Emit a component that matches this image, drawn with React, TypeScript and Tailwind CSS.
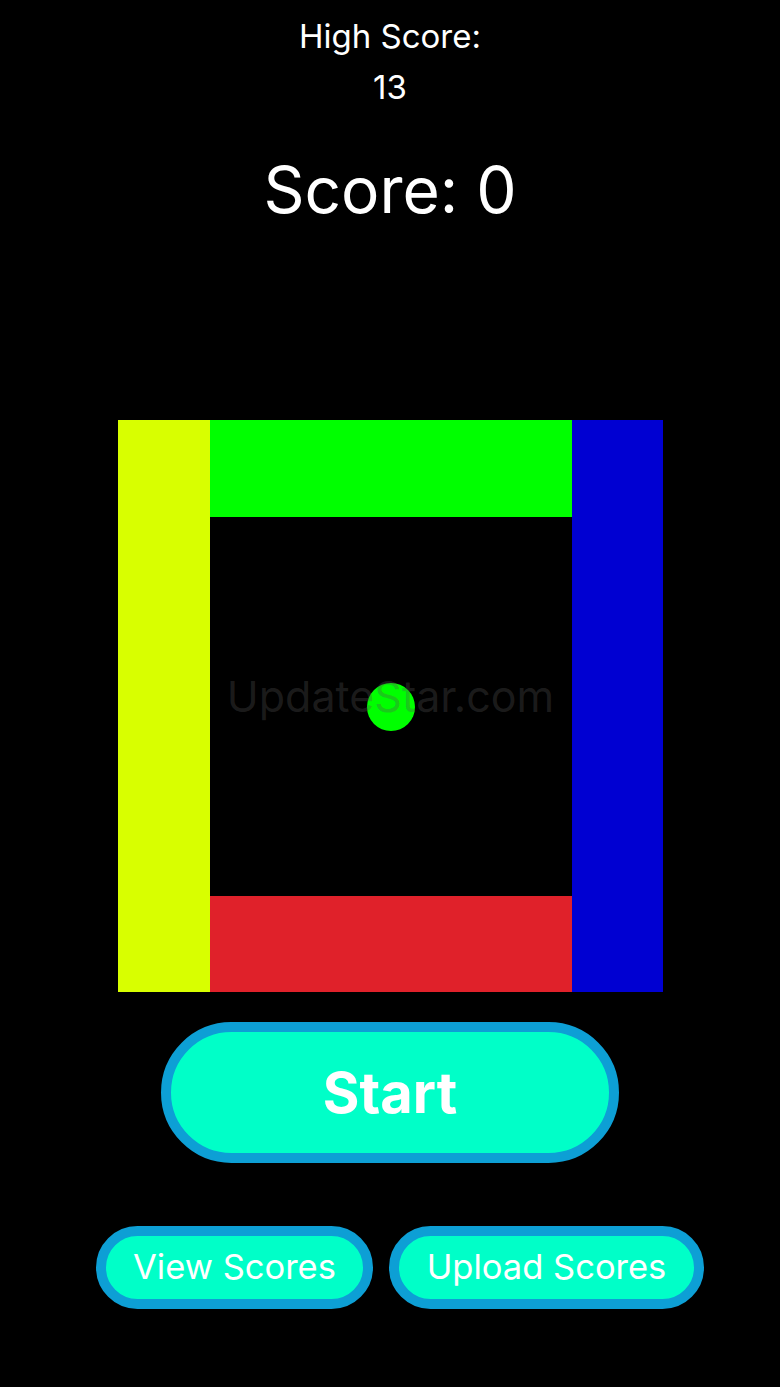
import React from 'react';

const font = { fontFamily: 'Inter, "Noto Sans", sans-serif' };

const PillButton: React.FC<{ label: string; className: string; textClass: string }> = ({ label, className, textClass }) => (
  <button
    className={`flex items-center justify-center rounded-full border-[10px] border-[#0d9fd5] bg-[#00ffc8] text-white ${className}`}
  >
    <span className={textClass}>{label}</span>
  </button>
);

export default function App() {
  return (
    <div className="flex min-h-[1387px] w-full flex-col items-center bg-black text-white" style={font}>
      <div className="pt-[11px] text-center text-[33px] leading-[51px]">
        <div>High Score:</div>
        <div>13</div>
      </div>

      <div className="mt-[41px] text-[64px] leading-[72px]">Score: 0</div>

      {/* Board */}
      <div className="mt-[194px] flex h-[572px] w-[545px]">
        <div className="w-[92px] bg-[#d8ff00]" />
        <div className="flex w-[362px] flex-col">
          <div className="h-[97px] bg-[#00ff00]" />
          <div className="relative flex flex-1 items-center justify-center bg-black">
            <div className="h-[48px] w-[48px] rounded-full bg-[#00ff00]" />
            <span className="absolute left-1/2 top-[159px] -translate-x-1/2 whitespace-nowrap text-[43px] leading-[40px] text-[rgba(85,85,85,0.33)]">
              UpdateStar.com
            </span>
          </div>
          <div className="h-[96px] bg-[#e0212a]" />
        </div>
        <div className="w-[91px] bg-[#0000d2]" />
      </div>

      <PillButton label="Start" className="mt-[30px] h-[141px] w-[458px]" textClass="text-[56px] font-bold leading-none" />

      <div className="mt-[63px] flex gap-[16px] pl-[20px]">
        <PillButton label="View Scores" className="h-[83px] w-[277px]" textClass="text-[34.5px] leading-none" />
        <PillButton label="Upload Scores" className="h-[83px] w-[315px]" textClass="text-[34.5px] leading-none" />
      </div>
    </div>
  );
}
